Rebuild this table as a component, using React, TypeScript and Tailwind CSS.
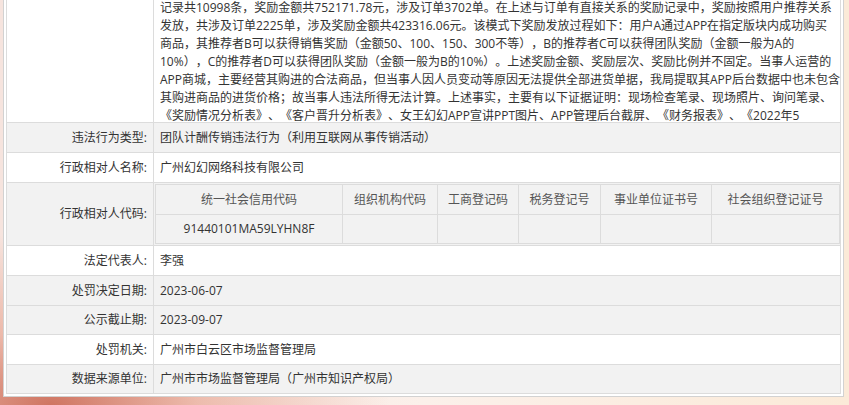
const LINES = [
  '记录共10998条，奖励金额共752171.78元，涉及订单3702单。在上述与订单有直接关系的奖励记录中，奖励按照用户推荐关系',
  '发放，共涉及订单2225单，涉及奖励金额共423316.06元。该模式下奖励发放过程如下：用户A通过APP在指定版块内成功购买',
  '商品，其推荐者B可以获得销售奖励（金额50、100、150、300不等），B的推荐者C可以获得团队奖励（金额一般为A的',
  '10%），C的推荐者D可以获得团队奖励（金额一般为B的10%）。上述奖励金额、奖励层次、奖励比例并不固定。当事人运营的',
  'APP商城，主要经营其购进的合法商品，但当事人因人员变动等原因无法提供全部进货单据，我局提取其APP后台数据中也未包含',
  '其购进商品的进货价格；故当事人违法所得无法计算。上述事实，主要有以下证据证明：现场检查笔录、现场照片、询问笔录、',
  '《奖励情况分析表》、《客户晋升分析表》、女王幻幻APP宣讲PPT图片、APP管理后台截屏、《财务报表》、《2022年5',
]

const CODE_HEADS = ['统一社会信用代码', '组织机构代码', '工商登记码', '税务登记号', '事业单位证书号', '社会组织登记证号']
const CODE_WIDTHS = [187, 95, 81, 82, 111, 128]

function Row({ label, value, gray, h = 'h-[30px]' }: { label: string; value: string; gray?: boolean; h?: string }) {
  return (
    <tr className={`${h} ${gray ? 'bg-[#f2f2f2]' : 'bg-white'}`}>
      <td className="border border-[#dcdcdc] pr-[6px] text-right whitespace-nowrap">{label}</td>
      <td className="border border-[#dcdcdc] pl-[6px] whitespace-nowrap">{value}</td>
    </tr>
  )
}

export default function App() {
  return (
    <div className="h-[405px] w-[849px] overflow-hidden bg-[radial-gradient(ellipse_at_6%_100%,#cf7562_0%,rgba(228,150,128,0.55)_13%,transparent_30%),linear-gradient(to_right,#f6e4de,#fbf0ea_50%,#fbead8)] font-['Open_Sans','Noto_Sans_CJK_SC',sans-serif] text-[12px] text-[#333] [text-spacing-trim:space-all]">
      <div className="-mt-[10px] ml-[3px] mr-[5px] border border-[#d2d2d2] bg-white p-[2px]">
        <table className="w-full table-fixed border-collapse border border-[#dcdcdc]">
          <colgroup>
            <col className="w-[147px]" />
            <col />
          </colgroup>
          <tbody>
            <tr className="bg-white">
              <td className="border border-[#dcdcdc]"></td>
              <td className="border border-[#dcdcdc] pt-[5px] pl-[6px] align-top leading-[18px]">
                {LINES.map((l, i) => (
                  <div key={l} className={`whitespace-nowrap ${i === LINES.length - 1 ? 'h-[15px]' : 'h-[18px]'}`}>{l}</div>
                ))}
              </td>
            </tr>
            <Row label="违法行为类型:" value="团队计酬传销违法行为（利用互联网从事传销活动）" gray />
            <Row label="行政相对人名称:" value="广州幻幻网络科技有限公司" />
            <tr className="bg-[#f2f2f2]">
              <td className="border border-[#dcdcdc] pr-[6px] text-right whitespace-nowrap">行政相对人代码:</td>
              <td className="border border-[#dcdcdc] p-[1px]">
                <table className="w-full table-fixed border-collapse border border-[#dcdcdc] text-[#555]">
                  <colgroup>
                    {CODE_WIDTHS.map((w, i) => <col key={i} style={{ width: w }} />)}
                  </colgroup>
                  <tbody>
                    <tr className="h-[30px]">
                      {CODE_HEADS.map(h => <td key={h} className="border border-[#dcdcdc] text-center whitespace-nowrap">{h}</td>)}
                    </tr>
                    <tr className="h-[29px]">
                      <td className="border border-[#dcdcdc] text-center text-[#333]">91440101MA59LYHN8F</td>
                      <td className="border border-[#dcdcdc]"></td>
                      <td className="border border-[#dcdcdc]"></td>
                      <td className="border border-[#dcdcdc]"></td>
                      <td className="border border-[#dcdcdc]"></td>
                      <td className="border border-[#dcdcdc]"></td>
                    </tr>
                  </tbody>
                </table>
              </td>
            </tr>
            <Row label="法定代表人:" value="李强" />
            <Row label="处罚决定日期:" value="2023-06-07" gray />
            <Row label="公示截止期:" value="2023-09-07" gray h="h-[29px]" />
            <Row label="处罚机关:" value="广州市白云区市场监督管理局" />
            <Row label="数据来源单位:" value="广州市市场监督管理局（广州市知识产权局）" gray h="h-[29px]" />
          </tbody>
        </table>
      </div>
    </div>
  )
}
